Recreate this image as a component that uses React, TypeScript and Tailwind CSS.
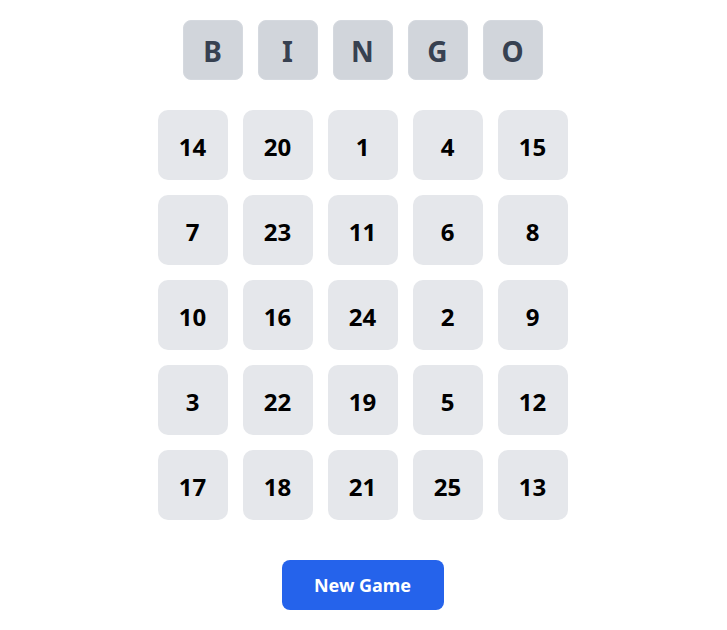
const board = [
  [14, 20, 1, 4, 15],
  [7, 23, 11, 6, 8],
  [10, 16, 24, 2, 9],
  [3, 22, 19, 5, 12],
  [17, 18, 21, 25, 13],
];

const letters = ["B", "I", "N", "G", "O"];

export default function App() {
  return (
    <div
      className="flex flex-col items-center pt-5 pr-[2px] bg-white min-h-screen"
      style={{ fontFamily: '"Noto Sans", "Open Sans", sans-serif' }}
    >
      <div className="flex gap-[15px]">
        {letters.map((l) => (
          <div
            key={l}
            className="w-[60px] h-[60px] flex items-center justify-center pt-0.5 rounded-lg bg-[#d1d5db] border border-[#d5d9df] text-[28px] font-bold text-[#374151]"
          >
            {l}
          </div>
        ))}
      </div>
      <div className="mt-[30px] grid grid-cols-5 gap-[15px]">
        {board.flat().map((n) => (
          <div
            key={n}
            className="w-[70px] h-[70px] flex items-center justify-center pt-1 rounded-[10px] bg-[#e5e7eb] text-2xl font-bold text-black"
          >
            {n}
          </div>
        ))}
      </div>
      <button className="mt-10 w-[162px] h-[50px] rounded-lg bg-[#2563eb] text-white text-lg font-bold">
        New Game
      </button>
    </div>
  );
}
